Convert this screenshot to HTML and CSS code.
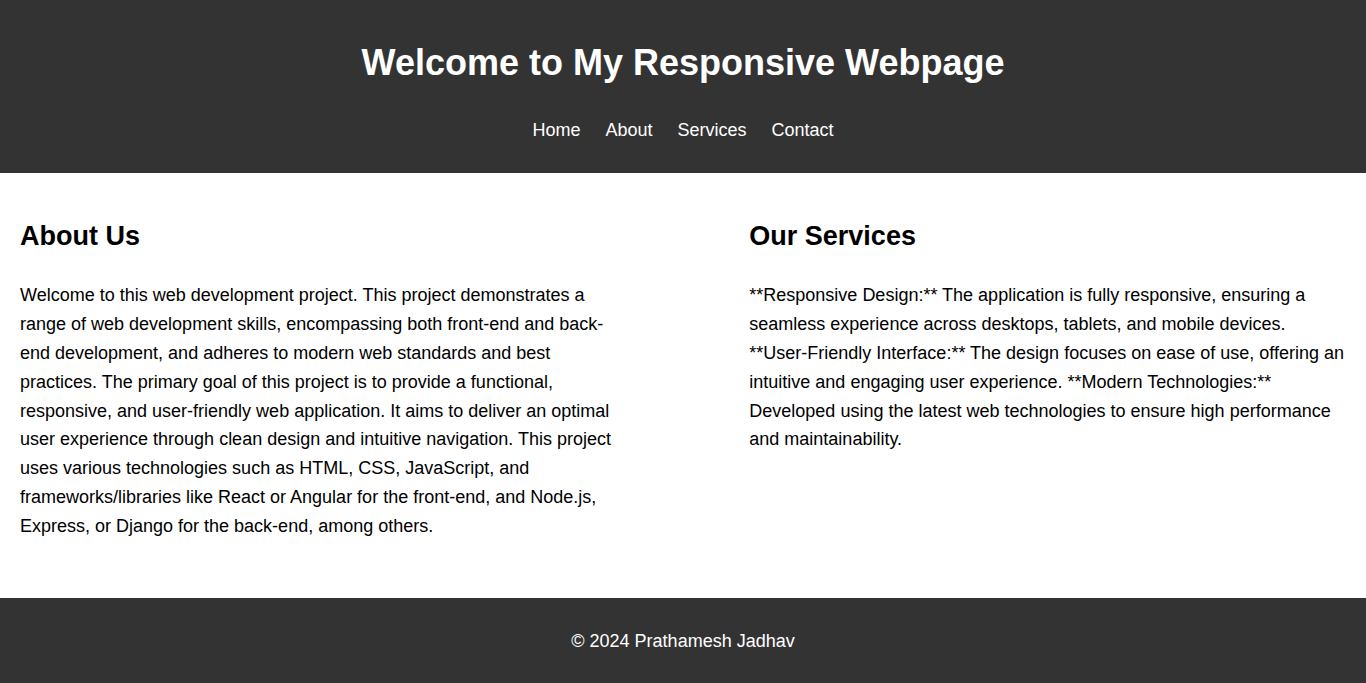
FILE: index.html
```html
<!DOCTYPE html>
<html lang="en">
<head>
<meta charset="utf-8">
<title>Responsive Webpage</title>
<link rel="stylesheet" href="styles.css">
</head>
<body>
<header class="site-header">
  <h1 class="site-title">Welcome to My Responsive Webpage</h1>
  <nav>
    <ul class="nav-list">
      <li><a href="#home">Home</a></li>
      <li><a href="#about">About</a></li>
      <li><a href="#services">Services</a></li>
      <li><a href="#contact">Contact</a></li>
    </ul>
  </nav>
</header>
<main class="content">
  <section class="panel" id="about">
    <h2 class="panel-title">About Us</h2>
    <p class="panel-text">Welcome to this web development project. This project demonstrates a range of web development skills, encompassing both front-end and back-end development, and adheres to modern web standards and best practices. The primary goal of this project is to provide a functional, responsive, and user-friendly web application. It aims to deliver an optimal user experience through clean design and intuitive navigation. This project uses various technologies such as HTML, CSS, JavaScript, and frameworks/libraries like React or Angular for the front-end, and Node.js, Express, or Django for the back-end, among others.</p>
  </section>
  <section class="panel" id="services">
    <h2 class="panel-title">Our Services</h2>
    <p class="panel-text">**Responsive Design:** The application is fully responsive, ensuring a seamless experience across desktops, tablets, and mobile devices. **User-Friendly Interface:** The design focuses on ease of use, offering an intuitive and engaging user experience. **Modern Technologies:** Developed using the latest web technologies to ensure high performance and maintainability.</p>
  </section>
</main>
<footer class="site-footer">
  <p class="footer-text">&copy; 2024 Prathamesh Jadhav</p>
</footer>
</body>
</html>
```

FILE: styles.css
```css
* {
  box-sizing: border-box;
}

html, body {
  margin: 0;
  padding: 0;
}

body {
  font-family: "Liberation Sans", Arial, sans-serif;
  font-size: 18px;
  line-height: 1.6;
  color: #000;
  background: #fff;
}

.site-header {
  background: #333;
  color: #fff;
  text-align: center;
  padding: 18px 20px 28px;
}

.site-title {
  font-size: 36px;
  font-weight: bold;
  line-height: 41.4px;
  margin: 24px 0 33px;
}

.nav-list {
  list-style: none;
  margin: 0;
  padding: 0;
  display: flex;
  justify-content: center;
  gap: 25px;
}

.nav-list a {
  color: #fff;
  text-decoration: none;
}

.content {
  display: flex;
  justify-content: space-between;
  padding: 20px 20px 39px;
}

.panel {
  flex: 0 0 45%;
}

.panel-title {
  font-size: 27px;
  font-weight: bold;
  line-height: 1.6;
  margin: 22px 0 23px;
}

.panel-text {
  margin: 0 0 18px;
}

.site-footer {
  background: #333;
  color: #fff;
  text-align: center;
  padding: 29px 20px 28px;
}

.footer-text {
  margin: 0;
}
```
